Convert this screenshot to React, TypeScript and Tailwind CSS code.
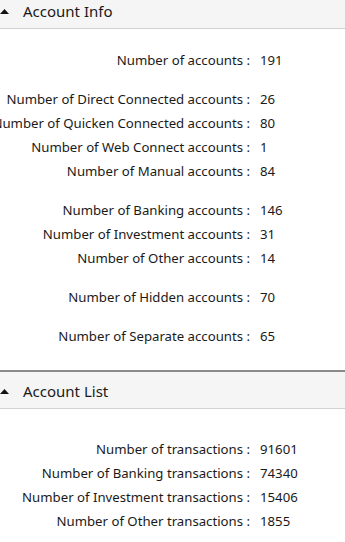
const accountGroups: [string, string][][] = [
  [['Number of accounts :', '191']],
  [
    ['Number of Direct Connected accounts :', '26'],
    ['Number of Quicken Connected accounts :', '80'],
    ['Number of Web Connect accounts :', '1'],
    ['Number of Manual accounts :', '84'],
  ],
  [
    ['Number of Banking accounts :', '146'],
    ['Number of Investment accounts :', '31'],
    ['Number of Other accounts :', '14'],
  ],
  [['Number of Hidden accounts :', '70']],
  [['Number of Separate accounts :', '65']],
];

const txRows: [string, string][] = [
  ['Number of transactions :', '91601'],
  ['Number of Banking transactions :', '74340'],
  ['Number of Investment transactions :', '15406'],
  ['Number of Other transactions :', '1855'],
];

function Header({ title, className = '' }: { title: string; className?: string }) {
  return (
    <div className={`flex items-center h-[37px] bg-[#f5f5f5] border-b border-[#d2d2d2] ${className}`}>
      <svg width="9" height="5" viewBox="0 0 9 5" className="mt-[2px]">
        <polygon points="0,5 9,5 4.5,0" fill="#111" />
      </svg>
      <span className="ml-[14px] mt-[3px] text-[15px] text-[#1a1a1a]">{title}</span>
    </div>
  );
}

function Row({ label, value }: { label: string; value: string }) {
  return (
    <div className="flex h-[24px] items-center whitespace-nowrap">
      <div className="w-[250px] shrink-0 flex justify-end overflow-visible">
        <span>{label}</span>
      </div>
      <span className="pl-[10px]">{value}</span>
    </div>
  );
}

export default function App() {
  return (
    <div
      className="w-[345px] h-[542px] overflow-hidden bg-white text-[13.2px] text-[#1a1a1a]"
      style={{ fontFamily: '"Noto Sans", sans-serif' }}
    >
      <Header title="Account Info" className="-mt-[8px]" />
      <div className="pt-[20px] flex flex-col gap-[15px]">
        {accountGroups.map((g, i) => (
          <div key={i}>
            {g.map(([l, v]) => (
              <Row key={l} label={l} value={v} />
            ))}
          </div>
        ))}
      </div>
      <div className="mt-[21px] border-t-2 border-[#8a8a8a]">
        <Header title="Account List" />
      </div>
      <div className="pt-[29px]">
        {txRows.map(([l, v]) => (
          <Row key={l} label={l} value={v} />
        ))}
      </div>
    </div>
  );
}
